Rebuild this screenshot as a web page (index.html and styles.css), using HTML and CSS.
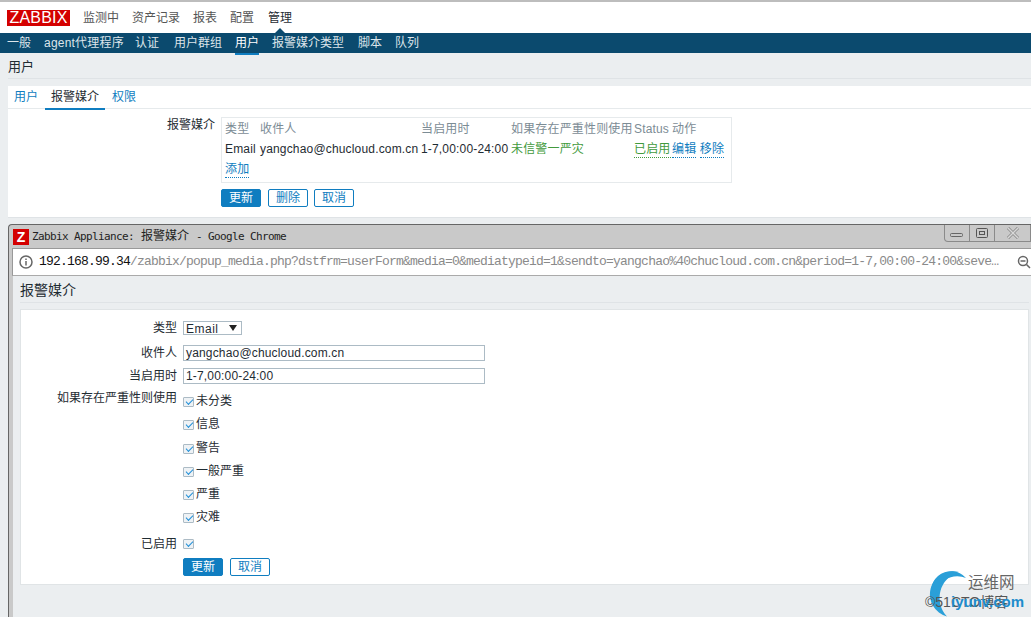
FILE: index.html
```html
<!DOCTYPE html>
<html lang="zh">
<head>
<meta charset="utf-8">
<title>Zabbix</title>
<link rel="stylesheet" href="styles.css">
</head>
<body>
<header class="top">
  <div class="logo">ZABBIX</div>
  <nav class="mainnav">
    <a>监测中</a><a>资产记录</a><a>报表</a><a>配置</a><a class="on">管理</a>
  </nav>
</header>
<nav class="subnav">
  <a>一般</a><a class="s-agent">agent代理程序</a><a class="s-auth">认证</a><a>用户群组</a><a class="on">用户</a><a class="s-mt">报警媒介类型</a><a>脚本</a><a>队列</a>
</nav>
<h1 class="title">用户</h1>
<section class="panel">
  <div class="tabs"><a>用户</a><a class="on">报警媒介</a><a>权限</a></div>
  <div class="mediarow">
    <div class="lbl">报警媒介</div>
    <div class="mediabox">
      <table class="media">
        <colgroup><col class="c1"><col class="c2"><col class="c3"><col class="c4"><col class="c5"><col class="c6"></colgroup>
        <tr class="head"><th>类型</th><th>收件人</th><th>当启用时</th><th>如果存在严重性则使用</th><th>Status</th><th>动作</th></tr>
        <tr class="data"><td>Email</td><td>yangchao@chucloud.com.cn</td><td>1-7,00:00-24:00</td><td class="green">未信警一严灾</td><td><span class="dot green">已启用</span></td><td class="acts"><span class="dot blue">编辑</span> <span class="dot blue">移除</span></td></tr>
        <tr class="add"><td colspan="6"><span class="dot blue">添加</span></td></tr>
      </table>
    </div>
  </div>
  <div class="btns mainbtns"><button class="pri">更新</button><button>删除</button><button class="last">取消</button></div>
</section>
<section class="win">
  <div class="winbar">
    <span class="zicon">Z</span>
    <span class="wintitle">Zabbix Appliance: <span class="wt-cjk">报警媒介</span> - Google Chrome</span>
    <div class="wctl">
      <span class="wb"><svg width="16" height="10" viewBox="0 0 16 10"><rect x="1.500" y="5.500" width="12" height="3" rx="1" fill="none" stroke="#666"/></svg></span>
      <span class="wb"><svg width="14" height="12" viewBox="0 0 14 12"><rect x="1.500" y="1.500" width="11" height="9" rx="1" fill="none" stroke="#555"/><rect x="4.500" y="4.500" width="5" height="3" fill="none" stroke="#555"/></svg></span>
      <span class="wb wbx"><svg width="14" height="12" viewBox="0 0 14 12"><path d="M2 1l10 10M12 1L2 11" stroke="#888" stroke-width="3" fill="none"/><path d="M2 1l10 10M12 1L2 11" stroke="#d8d8d8" stroke-width="1.500" fill="none"/></svg></span>
    </div>
  </div>
  <div class="urlbar">
    <svg class="info" width="14" height="14" viewBox="0 0 14 14"><circle cx="7" cy="7" r="6" fill="none" stroke="#666" stroke-width="1.500"/><path d="M7 6v4.500M7 3.500v1.500" stroke="#666" stroke-width="1.500"/></svg>
    <span class="url"><b>192.168.99.34</b>/zabbix/popup_media.php?dstfrm=userForm&amp;media=0&amp;mediatypeid=1&amp;sendto=yangchao%40chucloud.com.cn&amp;period=1-7,00:00-24:00&amp;seve…</span>
    <svg class="zoomi" width="14" height="14" viewBox="0 0 14 14"><circle cx="6" cy="6" r="4.500" fill="none" stroke="#666" stroke-width="1.500"/><path d="M3.500 6h5M9.500 9.500L13 13" stroke="#666" stroke-width="1.500"/></svg>
  </div>
  <div class="wincontent">
    <h2 class="subtitle">报警媒介</h2>
    <form class="form">
      <div class="row r-type"><label>类型</label><div class="sel">Email<i></i></div></div>
      <div class="row r-in"><label>收件人</label><div class="input">yangchao@chucloud.com.cn</div></div>
      <div class="row r-in"><label>当启用时</label><div class="input">1-7,00:00-24:00</div></div>
      <div class="row r-sev"><label>如果存在严重性则使用</label>
        <ul class="checks">
          <li><i class="cb"></i>未分类</li>
          <li><i class="cb"></i>信息</li>
          <li><i class="cb"></i>警告</li>
          <li><i class="cb"></i>一般严重</li>
          <li><i class="cb"></i>严重</li>
          <li><i class="cb"></i>灾难</li>
        </ul>
      </div>
      <div class="row r-en"><label>已启用</label><i class="cb"></i></div>
      <div class="btns popbtns"><button class="pri">更新</button><button>取消</button></div>
    </form>
  </div>
</section>
<div class="wm">
  <svg width="50" height="49" viewBox="0 0 50 49"><path d="M34 4A23 23 0 1 0 22 48.600A27 27 0 0 1 34 4Z" fill="#2a9fd8"/><path d="M41 10A19 19 0 0 0 11 36A22 22 0 0 1 41 10Z" fill="#2a9fd8"/></svg>
  <span class="wm1">运维网</span><span class="wm0">©51CTO博客</span><span class="wm2">iyunv.com</span>
</div>
</body>
</html>
```
FILE: styles.css
```css
* { box-sizing: border-box; }
html, body { margin: 0; height: 617px; overflow: hidden; }
body { position: relative; background: #ebeef0; color: #1f2c33; font: 12px/14px "Liberation Sans", "Noto Sans CJK SC", sans-serif; }
a { color: inherit; }
.top { height: 33px; background: #fff; border-top: 2px solid #bdbdbd; display: flex; align-items: center; padding: 0 0 0 7px; }
.logo { width: 63px; height: 16px; background: #d40000; color: #fff; font-size: 16px; line-height: 16px; letter-spacing: .2px; text-align: center; }
.mainnav { display: flex; margin-left: 13px; padding-top: 1px; gap: 13px; color: #555; }
.mainnav .on { color: #1f2c33; position: relative; margin-left: 1px; }
.mainnav .on::after { content: ""; position: absolute; left: 7px; bottom: -8px; border: 5px solid transparent; border-top: 0; border-bottom-color: #0b4a6e; }
.subnav { height: 20px; background: #0b4a6e; color: #dde5ea; display: flex; padding-left: 7px; gap: 13px; line-height: 21px; }
.subnav .on { color: #fff; height: 22px; border-bottom: 2px solid #0f7dc0; }
.s-agent { width: 78px; white-space: nowrap; letter-spacing: .2px; }
.s-auth { margin-right: 2px; }
.s-mt { margin-right: 1px; }
.title { margin: 0 0 7px 8px; height: 26px; line-height: 28px; font-weight: normal; font-size: 13px; border-bottom: 1px solid #dfe3e6; }
.panel { margin-left: 8px; height: 132px; background: #fff; border-bottom: 1px solid #dfe3e6; }
.tabs { display: flex; height: 23px; border-bottom: 1px solid #e6eaec; color: #0f7dc0; padding-left: 6px; line-height: 22px; }
.tabs a { margin-right: 13px; }
.tabs .on { color: #1f2c33; height: 24px; margin-left: -6px; margin-right: 7px; padding: 0 6px; border-bottom: 2px solid #0f7dc0; }
.mediarow { display: flex; padding-top: 8px; }
.lbl { width: 207px; text-align: right; line-height: 16px; }
.mediabox { width: 511px; height: 66px; margin-left: 6px; border: 1px solid #e6eaec; }
.media { border-collapse: collapse; white-space: nowrap; table-layout: fixed; width: 509px; letter-spacing: .17px; }
.c1 { width: 35px; } .c2 { width: 161px; } .c3 { width: 90px; } .c4 { width: 123px; } .c5 { width: 38px; }
.media th { color: #7c8c95; font-weight: normal; text-align: left; padding: 0 0 0 3px; }
.media td { padding: 0 0 0 3px; }
.head { height: 22px; } .data { height: 18px; } .add { height: 22px; }
.green { color: #429a3d; }
.blue { color: #0f7dc0; }
.dot { border-bottom: 1px dotted currentColor; padding-bottom: 1px; }
.btns { display: flex; }
.btns button { font: inherit; height: 18px; width: 40px; padding: 0; background: #fff; color: #0f7dc0; border: 1px solid #0f7dc0; border-radius: 2px; }
.btns .pri { background: #0f7dc0; color: #fff; }
.mainbtns { margin: 6px 0 0 213px; gap: 7px; }
.btns .last { margin-left: -1px; }
.win { margin: 6px 0 0 8px; background: #c9c9c9; border: 1px solid #666; border-right: 0; border-bottom: 0; border-radius: 4px 0 0 0; padding: 0 0 0 3px; height: 394px; }
.winbar { height: 23px; display: flex; align-items: center; }
.zicon { width: 16px; height: 16px; background: #d40000; color: #fff; font: bold 14px/16px "Liberation Sans", sans-serif; text-align: center; margin-left: 1px; }
.wintitle { margin-left: 3px; font: 11px/12px "DejaVu Sans Mono", "Noto Sans CJK SC", monospace; letter-spacing: -.62px; color: #222; white-space: nowrap; }
.wt-cjk { font-size: 12px; letter-spacing: 0; margin: 0 1px; }
.wctl { margin-left: auto; align-self: flex-start; height: 17px; display: flex; border: 1px solid #8a8a8a; border-top: 0; border-radius: 0 0 0 4px; }
.wb { width: 25px; display: flex; align-items: center; justify-content: center; border-right: 1px solid #8a8a8a; }
.wbx { width: 35px; border-right: 0; }
.urlbar { height: 28px; background: #fff; border-top: 1px solid #999; border-left: 1px solid #999; border-bottom: 1px solid #aaa; display: flex; align-items: center; padding-left: 6px; }
.url { margin-left: 6px; font: 13px/14px "Liberation Mono", monospace; color: #8a8a8a; white-space: nowrap; letter-spacing: -.8px; }
.url b { font-weight: normal; color: #111; }
.zoomi { margin-left: auto; }
.wincontent { background: #ebeef0; margin-left: 1px; height: 346px; padding: 0 2px 0 7px; }
.subtitle { margin: 0 0 6px; height: 27px; font-weight: normal; font-size: 14px; line-height: 28px; border-bottom: 1px solid #dfe3e6; }
.form { background: #fff; height: 276px; border: 1px solid #e0e4e6; padding-top: 11px; }
.row { display: flex; }
.row label { width: 156px; text-align: right; margin-right: 6px; }
.r-type { height: 24px; align-items: flex-start; }
.sel { width: 59px; height: 14px; border: 1px solid #acbbc5; line-height: 15px; padding-left: 2px; position: relative; overflow: hidden; letter-spacing: .5px; }
.sel::after { content: ""; position: absolute; left: 0; right: 0; bottom: 0; height: 1px; background: #fff; }
.sel i { position: absolute; right: 4px; top: 3px; border: 4px solid transparent; border-bottom: 0; border-top: 6px solid #222; }
.r-type label { line-height: 14px; }
.r-in { height: 23px; }
.r-in label { line-height: 16px; }
.input { width: 302px; height: 16px; line-height: 14px; border: 1px solid #acbbc5; padding-left: 2px; letter-spacing: .17px; }
.r-sev label { line-height: 14px; }
.checks { list-style: none; margin: 0; padding: 2px 0 0; }
.checks li { height: 23.300px; display: flex; align-items: flex-start; line-height: 16px; }
.cb { display: block; width: 11px; height: 10px; flex: none; border: 1px solid #acbbc5; border-radius: 1px; margin: 4px 2px 0 0; background: #eef2f5; position: relative; }
.cb::after { content: ""; position: absolute; left: 2px; top: 1px; width: 6px; height: 3px; border-left: 1px solid #1f8fd8; border-bottom: 1px solid #1f8fd8; transform: rotate(-45deg); }
.r-en { height: 24px; margin-top: 1px; }
.r-en label { line-height: 14px; margin-top: 3px; }
.r-en .cb { margin-top: 5px; }
.popbtns { margin-left: 162px; gap: 7px; }
.wm { position: absolute; left: 925px; top: 568px; width: 106px; height: 49px; }
.wm svg { position: absolute; left: 0; top: 0; }
.wm1 { position: absolute; left: 43px; top: 7px; font-size: 15.500px; line-height: 16px; color: #666; white-space: nowrap; }
.wm0 { position: absolute; left: 0; top: 26px; font-size: 14px; line-height: 16px; color: #555; white-space: nowrap; }
.wm2 { position: absolute; left: 26px; top: 25px; font-size: 15px; line-height: 18px; font-weight: bold; color: #1d8ccc; white-space: nowrap; }
```
